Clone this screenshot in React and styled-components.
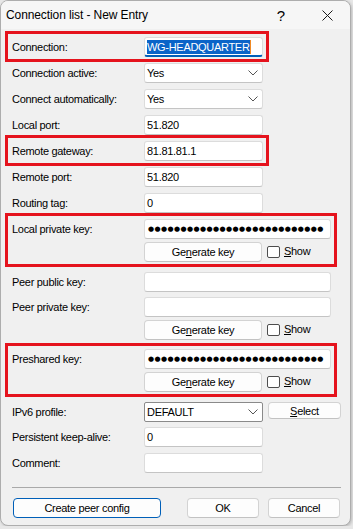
import React from 'react';
import styled, { createGlobalStyle } from 'styled-components';

const GlobalStyle = createGlobalStyle`
  * {
    box-sizing: border-box;
  }
  html,
  body {
    margin: 0;
    padding: 0;
    background: #e7e7e7;
  }
  body {
    font-family: 'Liberation Sans', Arial, sans-serif;
    font-size: 11px;
    letter-spacing: -0.3px;
    color: #000;
  }
`;

const Window = styled.div`
  width: 351px;
  height: 526px;
  display: flex;
  flex-direction: column;
  background: #f0f0f0;
  border: 1px solid #adadad;
  border-radius: 8px;
  overflow: hidden;
  box-shadow: 1px 1px 3px rgba(0, 0, 0, 0.2);
`;

const TitleBar = styled.div`
  height: 28px;
  flex-shrink: 0;
  display: flex;
  align-items: center;
  padding-left: 5px;
  background: #f6f6f6;
`;

const Title = styled.div`
  flex: 1;
  font-size: 12px;
  letter-spacing: -0.1px;
`;

const TitleButton = styled.div`
  width: 46px;
  height: 100%;
  display: flex;
  align-items: center;
  justify-content: center;
  font-size: 15px;
  letter-spacing: 0;
`;

const Body = styled.div`
  flex: 1;
  display: flex;
  flex-direction: column;
  padding: 8px 9px 0 11px;
`;

const Marked = styled.div`
  position: relative;
  width: ${({ $w }) => $w}px;
  margin-top: ${({ $gap }) => $gap ?? 0}px;

  &::after {
    content: '';
    position: absolute;
    top: -6px;
    left: -7px;
    right: -6px;
    bottom: -5px;
    border: 3px solid #e5131d;
    pointer-events: none;
  }
`;

const Row = styled.div`
  display: grid;
  grid-template-columns: 132px auto;
  justify-content: start;
  align-items: center;
  margin-top: ${({ $gap }) => $gap ?? 6}px;
`;

const Label = styled.div`
  white-space: nowrap;
`;

const Field = styled.div`
  width: ${({ $w }) => $w || 119}px;
  height: 20px;
  display: flex;
  align-items: center;
  justify-content: space-between;
  padding: 0 ${({ $tight }) => ($tight ? 0 : 4)}px 0 2px;
  background: #fff;
  border: 1px solid #dcdcdc;
  border-bottom-color: #c4c4c4;
  border-radius: 3px;
  white-space: nowrap;
  overflow: hidden;
`;

const FocusField = styled(Field)`
  border-bottom: 2px solid #005fb8;
  padding-top: 1px;
`;

const DarkField = styled(Field)`
  border-color: #8a8a8a;
  border-radius: 2px;
`;

const Selected = styled.span`
  background: #0a64c8;
  color: #fff;
  line-height: 14px;
`;

const Caret = styled.span`
  display: inline-block;
  width: 1px;
  height: 14px;
  background: #f08a24;
  margin-right: auto;
`;

const Dots = styled.span`
  font-family: 'DejaVu Sans', sans-serif;
  font-size: 7px;
  letter-spacing: 0.4px;
  padding-left: 1px;
`;

const Controls = styled.div`
  display: flex;
  align-items: center;
`;

const Button = styled.button`
  font: inherit;
  letter-spacing: inherit;
  color: #000;
  width: ${({ $w }) => $w}px;
  height: ${({ $h }) => $h || 20}px;
  padding: 0;
  background: #fdfdfd;
  border: 1px solid ${({ $default }) => ($default ? '#005fb8' : '#d3d3d3')};
  border-bottom-color: ${({ $default }) => ($default ? '#005fb8' : '#c2c2c2')};
  border-radius: 4px;
`;

const SideButton = styled(Button)`
  margin-left: 5px;
  align-self: flex-start;
`;

const Checkbox = styled.span`
  width: 13px;
  height: 12px;
  margin-left: 5px;
  background: #fff;
  border: 1px solid #4d4d4d;
  border-radius: 2px;
`;

const CheckLabel = styled.span`
  margin-left: 4px;
  margin-top: -3px;
`;

const Divider = styled.div`
  height: 1px;
  margin-top: 14px;
  background: #a9a9a9;
`;

const Footer = styled.div`
  display: flex;
  justify-content: space-between;
  margin: 10px 1px 0 1px;
`;

const ButtonGroup = styled.div`
  display: flex;
  gap: 9px;
`;

const Chevron = () => (
  <svg width="10" height="6" viewBox="0 0 10 6">
    <polyline points="0.5,0.5 5,5 9.5,0.5" fill="none" stroke="#555" strokeWidth="1" />
  </svg>
);

const CloseIcon = () => (
  <svg width="11" height="11" viewBox="0 0 11 11">
    <path d="M0.5 0.5 L10.5 10.5 M10.5 0.5 L0.5 10.5" stroke="#1a1a1a" strokeWidth="1" />
  </svg>
);

const DOTS = '●'.repeat(27);

const KeyActions = ({ gap = 3 }) => (
  <Row $gap={gap}>
    <span />
    <Controls>
      <Button $w={118}>
        Ge<u>n</u>erate key
      </Button>
      <Checkbox />
      <CheckLabel>
        <u>S</u>how
      </CheckLabel>
    </Controls>
  </Row>
);

const Select = ({ value, dark }) => {
  const Box = dark ? DarkField : Field;
  return (
    <Box>
      <span>{value}</span>
      <Chevron />
    </Box>
  );
};

const App = () => {
  return (
    <>
      <GlobalStyle />
      <Window>
        <TitleBar>
          <Title>Connection list - New Entry</Title>
          <TitleButton>?</TitleButton>
          <TitleButton>
            <CloseIcon />
          </TitleButton>
        </TitleBar>
        <Body>
          <Marked $w={251}>
            <Row $gap={0}>
              <Label>Connection:</Label>
              <FocusField>
                <Selected>WG-HEADQUARTER</Selected>
                <Caret />
              </FocusField>
            </Row>
          </Marked>
          <Row>
            <Label>Connection active:</Label>
            <Select value="Yes" />
          </Row>
          <Row>
            <Label>Connect automatically:</Label>
            <Select value="Yes" />
          </Row>
          <Row>
            <Label>Local port:</Label>
            <Field>51.820</Field>
          </Row>
          <Marked $w={251} $gap={6}>
            <Row $gap={0}>
              <Label>Remote gateway:</Label>
              <Field>81.81.81.1</Field>
            </Row>
          </Marked>
          <Row>
            <Label>Remote port:</Label>
            <Field>51.820</Field>
          </Row>
          <Row>
            <Label>Routing tag:</Label>
            <Field>0</Field>
          </Row>
          <Marked $w={319} $gap={6}>
            <Row $gap={0}>
              <Label>Local private key:</Label>
              <Field $w={187} $tight>
                <Dots>{DOTS}</Dots>
              </Field>
            </Row>
            <KeyActions />
          </Marked>
          <Row $gap={10}>
            <Label>Peer public key:</Label>
            <Field $w={187} />
          </Row>
          <Row $gap={5}>
            <Label>Peer private key:</Label>
            <Field $w={187} />
          </Row>
          <KeyActions />
          <Marked $w={319} $gap={9}>
            <Row $gap={0}>
              <Label>Preshared key:</Label>
              <Field $w={187} $tight>
                <Dots>{DOTS}</Dots>
              </Field>
            </Row>
            <KeyActions />
          </Marked>
          <Row $gap={10}>
            <Label>IPv6 profile:</Label>
            <Controls>
              <Select value="DEFAULT" dark />
              <SideButton $w={73} $h={17}>
                <u>S</u>elect
              </SideButton>
            </Controls>
          </Row>
          <Row $gap={5}>
            <Label>Persistent keep-alive:</Label>
            <Field>0</Field>
          </Row>
          <Row>
            <Label>Comment:</Label>
            <Field />
          </Row>
          <Divider />
          <Footer>
            <Button $w={148} $default>
              Create peer config
            </Button>
            <ButtonGroup>
              <Button $w={72}>OK</Button>
              <Button $w={72}>Cancel</Button>
            </ButtonGroup>
          </Footer>
        </Body>
      </Window>
    </>
  );
};

export default App;
